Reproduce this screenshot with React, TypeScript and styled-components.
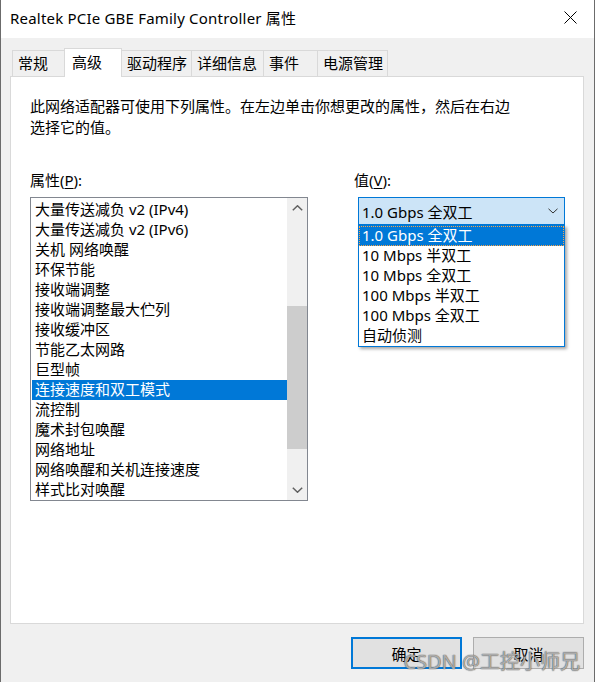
import React from "react";
import styled, { createGlobalStyle } from "styled-components";

const Global = createGlobalStyle`
  html, body { margin: 0; padding: 0; background: #f0f0f0; }
  body { font-family: "Noto Sans", "Noto Sans CJK SC", sans-serif; color: #000; }
  * { box-sizing: border-box; }
`;

const FONT = `"Noto Sans", "Noto Sans CJK SC", sans-serif`;

const Window = styled.div`
  position: relative;
  width: 595px;
  height: 682px;
  background: #f0f0f0;
  border-left: 1px solid #6b6b6b;
  border-right: 1px solid #6b6b6b;
  display: flex;
  flex-direction: column;
  font-family: ${FONT};
  font-size: 15px;
  overflow: hidden;
`;

const TitleBar = styled.div`
  height: 38px;
  background: #fff;
  display: flex;
  align-items: center;
  justify-content: space-between;
  padding-left: 9px;
`;

const TitleText = styled.div`
  font-size: 15px;
  line-height: 20px;
  margin-top: -2px;
  letter-spacing: 0.2px;
`;

const CloseBtn = styled.div`
  width: 46px;
  height: 38px;
  display: flex;
  align-items: center;
  justify-content: center;
  margin-right: 1px;
  margin-top: -4px;
`;

const Body = styled.div`
  display: flex;
  flex-direction: column;
  padding: 10px 10px 0 9px;
`;

const TabStrip = styled.div`
  position: relative;
  z-index: 1;
  height: 28px;
  display: flex;
  align-items: flex-end;
  padding-left: 2px;
`;

const Tab = styled.div<{ $w: number; $active?: boolean }>`
  width: ${(p) => p.$w}px;
  height: ${(p) => (p.$active ? 29 : 26)}px;
  margin-bottom: ${(p) => (p.$active ? -1 : 0)}px;
  margin-left: -1px;
  border: 1px solid #d9d9d9;
  border-bottom: none;
  background: ${(p) => (p.$active ? "#fff" : "#f0f0f0")};
  padding-left: ${(p) => (p.$active ? 7 : 5)}px;
  line-height: ${(p) => (p.$active ? 26 : 24)}px;
  font-size: 15px;
  white-space: nowrap;
  position: relative;
  z-index: ${(p) => (p.$active ? 2 : 1)};
  &:first-child { margin-left: 0; }
`;

const Panel = styled.div`
  width: 574px;
  height: 548px;
  background: #fff;
  border: 1px solid #d9d9d9;
  padding: 19px 0 0 19px;
  display: flex;
  flex-direction: column;
`;

const Description = styled.div`
  font-size: 15px;
  line-height: 21px;
  width: 540px;
`;

const Columns = styled.div`
  display: grid;
  grid-template-columns: 278px 212px;
  column-gap: 46px;
  margin-top: 32px;
`;

const Column = styled.div`
  display: flex;
  flex-direction: column;
  position: relative;
`;

const Label = styled.div`
  font-size: 15px;
  line-height: 20px;
  height: 20px;
  margin-bottom: 7px;
  u { text-decoration: underline; text-underline-offset: 2px; }
`;

const ListBox = styled.div`
  width: 278px;
  height: 304px;
  border: 1px solid #828790;
  display: flex;
  overflow: hidden;
`;

const Items = styled.div`
  flex: 1;
  padding: 2px 0 0 1px;
  display: flex;
  flex-direction: column;
  overflow: hidden;
`;

const Item = styled.div<{ $selected?: boolean }>`
  height: 20px;
  line-height: 19px;
  flex-shrink: 0;
  padding-left: 3px;
  white-space: nowrap;
  font-size: 15px;
  background: ${(p) => (p.$selected ? "#0078d7" : "transparent")};
  color: ${(p) => (p.$selected ? "#fff" : "#000")};
`;

const ScrollBar = styled.div`
  width: 20px;
  background: #f0f0f0;
  display: flex;
  flex-direction: column;
`;

const ScrollArrow = styled.div`
  height: 20px;
  flex-shrink: 0;
  display: flex;
  align-items: center;
  justify-content: center;
`;

const ScrollTrack = styled.div`
  flex: 1;
  padding-top: 88px;
`;

const ScrollThumb = styled.div`
  height: 143px;
  background: #cdcdcd;
`;

const ComboWrap = styled.div`
  position: relative;
  margin-left: 4px;
  width: 207px;
`;

const Combo = styled.div`
  height: 28px;
  border: 1px solid #0078d7;
  background: #cce4f7;
  display: flex;
  align-items: center;
  justify-content: space-between;
  padding: 0 6px 0 3px;
  font-size: 15px;
`;

const Dropdown = styled.div`
  position: absolute;
  top: 28px;
  left: 0;
  width: 207px;
  border: 1px solid #0078d7;
  background: #fff;
  box-shadow: 2px 2px 3px rgba(0, 0, 0, 0.35);
  z-index: 5;
`;

const Option = styled.div<{ $selected?: boolean }>`
  height: 20px;
  line-height: 19px;
  padding-left: 3px;
  white-space: nowrap;
  font-size: 15px;
  background: ${(p) => (p.$selected ? "#0078d7" : "#fff")};
  color: ${(p) => (p.$selected ? "#fff" : "#000")};
  outline: ${(p) => (p.$selected ? "1px dotted #f7a44a" : "none")};
  outline-offset: -1px;
`;

const ButtonRow = styled.div`
  display: flex;
  justify-content: flex-end;
  gap: 11px;
  margin-top: 13px;
`;

const Button = styled.div<{ $focused?: boolean }>`
  width: 111px;
  height: 32px;
  background: #e1e1e1;
  border: ${(p) => (p.$focused ? "2px solid #0078d7" : "1px solid #adadad")};
  display: flex;
  align-items: center;
  justify-content: center;
  font-size: 15px;
`;

const Watermark = styled.div`
  position: absolute;
  right: 14px;
  top: 648px;
  font-family: "Noto Sans", "Noto Sans CJK SC", sans-serif;
  font-size: 20px;
  line-height: 28px;
  color: rgba(255, 255, 255, 0.55);
  text-shadow: 0 0 1px rgba(70, 70, 70, 0.9), 0 0 1px rgba(70, 70, 70, 0.9);
  white-space: nowrap;
  pointer-events: none;
`;

const properties = [
  "大量传送减负 v2 (IPv4)",
  "大量传送减负 v2 (IPv6)",
  "关机 网络唤醒",
  "环保节能",
  "接收端调整",
  "接收端调整最大伫列",
  "接收缓冲区",
  "节能乙太网路",
  "巨型帧",
  "连接速度和双工模式",
  "流控制",
  "魔术封包唤醒",
  "网络地址",
  "网络唤醒和关机连接速度",
  "样式比对唤醒",
];

const options = [
  "1.0 Gbps 全双工",
  "10 Mbps 半双工",
  "10 Mbps 全双工",
  "100 Mbps 半双工",
  "100 Mbps 全双工",
  "自动侦测",
];

const tabs: { label: string; w: number; active?: boolean }[] = [
  { label: "常规", w: 53 },
  { label: "高级", w: 58, active: true },
  { label: "驱动程序", w: 71 },
  { label: "详细信息", w: 73 },
  { label: "事件", w: 55 },
  { label: "电源管理", w: 71 },
];

export default function App() {
  return (
    <>
      <Global />
      <Window>
        <TitleBar>
          <TitleText>Realtek PCIe GBE Family Controller 属性</TitleText>
          <CloseBtn>
            <svg width="13" height="13" viewBox="0 0 13 13">
              <path d="M0.5 0.5 L12.5 12.5 M12.5 0.5 L0.5 12.5" stroke="#000" strokeWidth="1" fill="none" />
            </svg>
          </CloseBtn>
        </TitleBar>
        <Body>
          <TabStrip>
            {tabs.map((t) => (
              <Tab key={t.label} $w={t.w} $active={t.active}>
                {t.label}
              </Tab>
            ))}
          </TabStrip>
          <Panel>
            <Description>
              此网络适配器可使用下列属性。在左边单击你想更改的属性，然后在右边
              <br />
              选择它的值。
            </Description>
            <Columns>
              <Column>
                <Label>
                  属性(<u>P</u>):
                </Label>
                <ListBox>
                  <Items>
                    {properties.map((p) => (
                      <Item key={p} $selected={p === "连接速度和双工模式"}>
                        {p}
                      </Item>
                    ))}
                  </Items>
                  <ScrollBar>
                    <ScrollArrow>
                      <svg width="11" height="6" viewBox="0 0 11 6">
                        <path d="M0.8 5.3 L5.5 0.8 L10.2 5.3" stroke="#606060" strokeWidth="1.5" fill="none" />
                      </svg>
                    </ScrollArrow>
                    <ScrollTrack>
                      <ScrollThumb />
                    </ScrollTrack>
                    <ScrollArrow>
                      <svg width="11" height="6" viewBox="0 0 11 6">
                        <path d="M0.8 0.7 L5.5 5.2 L10.2 0.7" stroke="#606060" strokeWidth="1.5" fill="none" />
                      </svg>
                    </ScrollArrow>
                  </ScrollBar>
                </ListBox>
              </Column>
              <Column>
                <Label>
                  值(<u>V</u>):
                </Label>
                <ComboWrap>
                  <Combo>
                    <span>1.0 Gbps 全双工</span>
                    <svg width="10" height="6" viewBox="0 0 10 6">
                      <path d="M0.5 0.8 L5 5 L9.5 0.8" stroke="#333" strokeWidth="1" fill="none" />
                    </svg>
                  </Combo>
                  <Dropdown>
                    {options.map((o, i) => (
                      <Option key={o} $selected={i === 0}>
                        {o}
                      </Option>
                    ))}
                  </Dropdown>
                </ComboWrap>
              </Column>
            </Columns>
          </Panel>
          <ButtonRow>
            <Button $focused>确定</Button>
            <Button>取消</Button>
          </ButtonRow>
        </Body>
        <Watermark>CSDN @工控小师兄</Watermark>
      </Window>
    </>
  );
}
